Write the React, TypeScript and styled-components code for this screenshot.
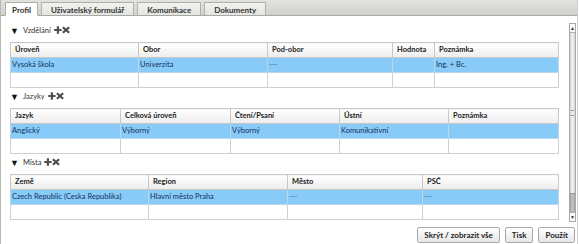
import styled, { createGlobalStyle } from 'styled-components';

const GlobalStyle = createGlobalStyle`
  html, body {
    margin: 0;
    padding: 0;
    background: #ffffff;
  }
  body {
    font-family: Lato, "Open Sans", sans-serif;
    font-size: 7.5px;
    color: #222;
  }
`;

const Widget = styled.div`
  width: 578px;
  height: 244px;
  display: flex;
  flex-direction: column;
  border-left: 1px solid #b8b8b4;
  border-right: 1px solid #d0d0cc;
  box-sizing: border-box;
  overflow: hidden;
`;

const TabBar = styled.div`
  height: 16px;
  flex-shrink: 0;
  display: flex;
  align-items: flex-end;
  gap: 3px;
  padding-left: 4px;
  box-sizing: border-box;
  background: linear-gradient(#e2e2de, #d2d2cd);
  border-bottom: 1px solid #a9a9a3;
`;

const Tab = styled.div<{ $active?: boolean }>`
  height: 14px;
  margin-bottom: -1px;
  padding: 1px ${(p) => (p.$active ? '6px' : '9px')} 0;
  display: flex;
  align-items: center;
  box-sizing: border-box;
  font-size: 8px;
  font-weight: 700;
  color: #333;
  background: ${(p) => (p.$active ? '#ffffff' : 'linear-gradient(#f2f2f0, #e4e4e0)')};
  border: 1px solid #b0b0aa;
  border-bottom: 1px solid ${(p) => (p.$active ? '#ffffff' : '#a9a9a3')};
`;

const Body = styled.div`
  flex: 1;
  display: flex;
  min-height: 0;
`;

const Main = styled.div`
  flex: 1;
  padding: 6px 0 0 9px;
  display: flex;
  flex-direction: column;
`;

const Section = styled.div`
  width: 548px;
`;

const SectionTitle = styled.div`
  height: 12px;
  margin: 2px 0 6px;
  display: flex;
  align-items: center;
  gap: 2px;
  color: #333;
`;

const Toggle = styled.span`
  font-size: 9px;
  line-height: 1;
  color: #111;
  width: 11px;
`;

const TitleText = styled.span`
  margin-right: 1px;
`;

const Table = styled.table`
  width: 548px;
  border-collapse: collapse;
  table-layout: fixed;
  border: 1px solid #c2c2c2;
`;

const Col = styled.col<{ $w: number }>`
  width: ${(p) => p.$w}px;
`;

const HeadCell = styled.th`
  line-height: 14px;
  padding: 0 0 0 4px;
  text-align: left;
  font-weight: 700;
  color: #222;
  border: 1px solid #c8c8c8;
  background: linear-gradient(#ffffff, #ededed);
  white-space: nowrap;
  overflow: hidden;
`;

const Cell = styled.td<{ $selected?: boolean; $muted?: boolean }>`
  line-height: 14px;
  padding: 0 0 0 1px;
  border: 1px solid ${(p) => (p.$selected ? '#b8d8ee' : '#cfcfcf')};
  border-top: none;
  background: ${(p) => (p.$selected ? '#88cbf8' : '#ffffff')};
  color: ${(p) => (p.$muted ? '#4a6a8a' : '#14305a')};
  white-space: nowrap;
  overflow: hidden;
`;

const Dot = styled.div`
  margin: 6px 0 0 2px;
  width: 1px;
  height: 1px;
  background: #666;
`;

const Scrollbar = styled.div`
  width: 9px;
  margin: 7px 1px 0 11px;
  height: 199px;
  display: flex;
  flex-direction: column;
  border: 1px solid #a8a8a8;
  box-sizing: border-box;
  background: #bdbdbd;
`;

const Arrow = styled.div`
  height: 8px;
  flex-shrink: 0;
  background: #fafafa;
  display: flex;
  align-items: center;
  justify-content: center;
  font-size: 5px;
  color: #333;
  border-bottom: 1px solid #b0b0b0;
  &:last-child {
    border-bottom: none;
    border-top: 1px solid #b0b0b0;
  }
`;

const Thumb = styled.div`
  height: 160px;
  background: linear-gradient(90deg, #cfcfcf, #f4f4f4 45%, #d4d4d4);
  border-bottom: 1px solid #999;
  display: flex;
  align-items: center;
  justify-content: center;
`;

const Grip = styled.div`
  width: 3px;
  height: 4px;
  border-top: 1px solid #999;
  border-bottom: 1px solid #999;
`;

const Track = styled.div`
  flex: 1;
  background: linear-gradient(90deg, #9e9e9e, #c4c4c4 50%, #a4a4a4);
`;

const Footer = styled.div`
  height: 18px;
  flex-shrink: 0;
  display: flex;
  justify-content: flex-end;
  align-items: flex-start;
  gap: 5px;
  padding: 1px 2px 0 0;
  box-sizing: border-box;
`;

const Button = styled.button`
  height: 16px;
  padding: 0 6px;
  font-family: Lato, "Open Sans", sans-serif;
  font-size: 8px;
  font-weight: 700;
  color: #222;
  border: 1px solid #a8a8a8;
  border-radius: 2px;
  background: linear-gradient(#ffffff, #e6e6e6);
  cursor: pointer;
`;

const Icons = () => (
  <svg width="17" height="8" viewBox="0 0 17 8">
    <path d="M2.8 0.3h2.2v2.6h2.6v2.2h-2.6v2.6h-2.2v-2.6h-2.6v-2.2h2.6z" fill="#505050" />
    <path d="M9.6 0.4l2.4 2.2 2.4-2.2 1.5 1.5-2.3 2.1 2.3 2.1-1.5 1.5-2.4-2.2-2.4 2.2-1.5-1.5 2.3-2.1-2.3-2.1z" fill="#505050" />
  </svg>
);

type Column = { title: string; width: number };
type DataTableProps = { title: string; columns: Column[]; row: string[] };

const DataTable = ({ title, columns, row }: DataTableProps) => (
  <Section>
    <SectionTitle>
      <Toggle>▼</Toggle>
      <TitleText>{title}</TitleText>
      <Icons />
    </SectionTitle>
    <Table>
      <colgroup>
        {columns.map((c) => (
          <Col key={c.title} $w={c.width} />
        ))}
      </colgroup>
      <thead>
        <tr>
          {columns.map((c) => (
            <HeadCell key={c.title}>{c.title}</HeadCell>
          ))}
        </tr>
      </thead>
      <tbody>
        <tr>
          {row.map((v, i) => (
            <Cell key={i} $selected $muted={v === '---'}>
              {v || '\u00a0'}
            </Cell>
          ))}
        </tr>
        <tr>
          {columns.map((c) => (
            <Cell key={c.title}>{'\u00a0'}</Cell>
          ))}
        </tr>
      </tbody>
    </Table>
  </Section>
);

export default function App() {
  return (
    <>
      <GlobalStyle />
      <Widget>
        <TabBar>
          <Tab $active>Profil</Tab>
          <Tab>Uživatelský formulář</Tab>
          <Tab>Komunikace</Tab>
          <Tab>Dokumenty</Tab>
        </TabBar>
        <Body>
          <Main>
            <DataTable
              title="Vzdělání"
              columns={[
                { title: 'Úroveň', width: 128 },
                { title: 'Obor', width: 129 },
                { title: 'Pod-obor', width: 125 },
                { title: 'Hodnota', width: 42 },
                { title: 'Poznámka', width: 124 },
              ]}
              row={['Vysoká škola', 'Univerzita', '---', '', 'Ing. + Bc.']}
            />
            <DataTable
              title="Jazyky"
              columns={[
                { title: 'Jazyk', width: 110 },
                { title: 'Celková úroveň', width: 110 },
                { title: 'Čtení/Psaní', width: 109 },
                { title: 'Ústní', width: 109 },
                { title: 'Poznámka', width: 110 },
              ]}
              row={['Anglický', 'Výborný', 'Výborný', 'Komunikativní', '']}
            />
            <DataTable
              title="Místa"
              columns={[
                { title: 'Země', width: 138 },
                { title: 'Region', width: 139 },
                { title: 'Město', width: 135 },
                { title: 'PSČ', width: 136 },
              ]}
              row={['Czech Republic (Ceska Republika)', 'Hlavní město Praha', '---', '---']}
            />
            <Dot />
          </Main>
          <Scrollbar>
            <Arrow>▲</Arrow>
            <Thumb>
              <Grip />
            </Thumb>
            <Track />
            <Arrow>▼</Arrow>
          </Scrollbar>
        </Body>
        <Footer>
          <Button>Skrýt / zobrazit vše</Button>
          <Button>Tisk</Button>
          <Button>Použít</Button>
        </Footer>
      </Widget>
    </>
  );
}
